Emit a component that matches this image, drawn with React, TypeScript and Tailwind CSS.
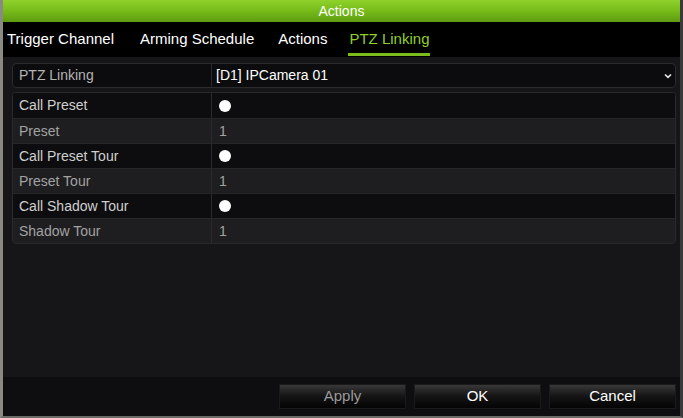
import React from "react";

const rows = [
  { label: "Call Preset", value: null, dark: true },
  { label: "Preset", value: "1", dark: false },
  { label: "Call Preset Tour", value: null, dark: true },
  { label: "Preset Tour", value: "1", dark: false },
  { label: "Call Shadow Tour", value: null, dark: true },
  { label: "Shadow Tour", value: "1", dark: false },
];

export default function App() {
  return (
    <div
      className="w-[683px] h-[418px] flex flex-col border-l-[3px] border-r-[3px] border-b-[2px] border-l-[#8a8a82] border-r-[#3a3a3a] border-b-[#6a6a66] bg-[#161618] overflow-hidden"
      style={{ fontFamily: '"Liberation Sans", Arial, sans-serif' }}
    >
      <div className="h-[22px] shrink-0 bg-gradient-to-b from-[#8fd22c] via-[#76bb18] to-[#5e9c12] flex items-center justify-center text-white text-[14px]">
        Actions
      </div>
      <div className="h-[35px] shrink-0 bg-black flex items-center pl-[4px] text-[15px] text-white">
        <span>Trigger Channel</span>
        <span className="ml-[26px]">Arming Schedule</span>
        <span className="ml-[24px]">Actions</span>
        <span className="ml-[22px] relative text-[#8fd02a]">
          PTZ Linking
          <span className="absolute left-[-1px] right-[-1px] top-[25px] h-[3px] bg-[#7cbd1c]"></span>
        </span>
      </div>
      <div className="flex-1 flex flex-col pl-[9px] pt-[6px] text-[14px]">
        <div className="w-[664px] h-[25px] flex items-center rounded-[4px] border border-[#2c2c2e] bg-[#0c0c0e]">
          <div className="w-[199px] h-full flex items-center pl-[6px] text-[#b4b4b4] border-r border-[#2a2a2c]">
            PTZ Linking
          </div>
          <div className="flex-1 flex items-center justify-between pl-[4px] pr-[3px] text-white">
            <span>[D1] IPCamera 01</span>
            <svg width="8" height="6" viewBox="0 0 8 6" className="mt-[1px]">
              <path d="M1 1.5 L4 4.3 L7 1.5" stroke="#e6e6e6" strokeWidth="1.7" fill="none" />
            </svg>
          </div>
        </div>
        <div className="mt-[4px] w-[664px] rounded-[4px] border border-[#2a2a2c] overflow-hidden flex flex-col">
          {rows.map((r, i) => (
            <div
              key={i}
              className={
                "h-[25px] flex items-center " +
                (r.dark ? "bg-[#0d0d0f] text-[#cfcfcf]" : "bg-[#1e1e20] text-[#a2a2a2]") +
                (i > 0 ? " border-t border-[#262628]" : "")
              }
            >
              <div className="w-[199px] h-full flex items-center pl-[6px] border-r border-[#2a2a2c]">
                {r.label}
              </div>
              <div className="flex-1 flex items-center pl-[7px]">
                {r.value ? (
                  <span>{r.value}</span>
                ) : (
                  <span className="w-[12px] h-[12px] rounded-full bg-white"></span>
                )}
              </div>
            </div>
          ))}
        </div>
      </div>
      <div className="h-[39px] shrink-0 bg-[#0e0e10] flex items-center justify-end gap-[8px] pr-[4px] text-[15px]">
        <button className="w-[127px] h-[25px] bg-gradient-to-b from-[#383838] via-[#141414] to-[#050505] text-[#9a9a9a] border border-[#1a1a1a]">
          Apply
        </button>
        <button className="w-[127px] h-[25px] bg-gradient-to-b from-[#383838] via-[#141414] to-[#050505] text-white border border-[#1a1a1a]">
          OK
        </button>
        <button className="w-[127px] h-[25px] bg-gradient-to-b from-[#383838] via-[#141414] to-[#050505] text-white border border-[#1a1a1a]">
          Cancel
        </button>
      </div>
    </div>
  );
}
